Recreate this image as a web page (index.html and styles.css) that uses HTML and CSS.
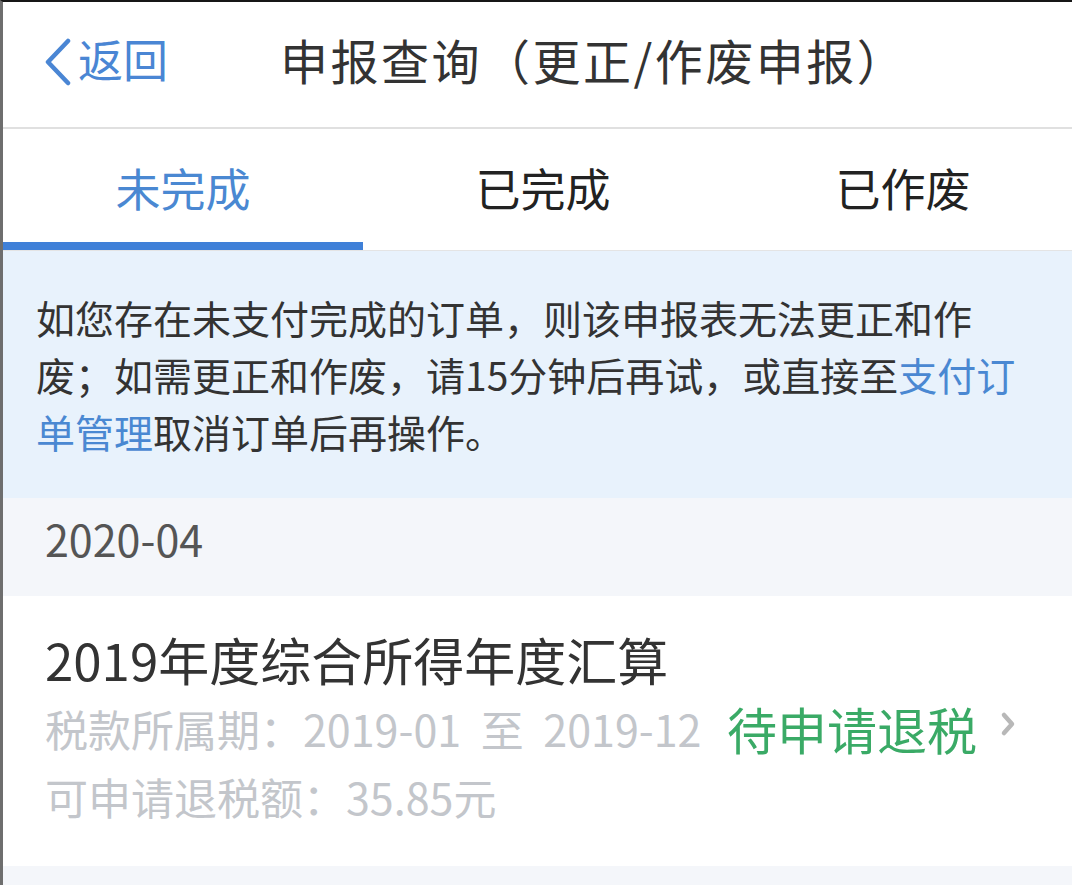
FILE: index.html
```html
<!DOCTYPE html>
<html lang="zh-CN">
<head>
<meta charset="utf-8">
<title>申报查询</title>
<link rel="stylesheet" href="styles.css">
</head>
<body>
<div class="app">
  <header class="nav">
    <a class="back">
      <svg class="back-icon" viewBox="0 0 30 48" width="30" height="48"><polyline points="25,3 5,24 25,45" fill="none" stroke="#4a86d4" stroke-width="4.5" stroke-linecap="round" stroke-linejoin="round"/></svg>
      <span>返回</span>
    </a>
    <h1 class="title">申报查询（更正/作废申报）</h1>
  </header>
  <nav class="tabs">
    <div class="tab active">未完成</div>
    <div class="tab">已完成</div>
    <div class="tab">已作废</div>
  </nav>
  <div class="notice">如您存在未支付完成的订单，则该申报表无法更正和作废；如需更正和作废，请15分钟后再试，或直接至<a class="link">支付订单管理</a>取消订单后再操作。</div>
  <div class="group-date">2020-04</div>
  <div class="record">
    <div class="record-title">2019年度综合所得年度汇算</div>
    <div class="record-row">
      <span class="muted">税款所属期：2019-01 至 2019-12</span>
      <span class="status">待申请退税</span>
      <svg class="chev" viewBox="0 0 18 26" width="18" height="26"><polyline points="5,4 13,13 5,22" fill="none" stroke="#b8b8b8" stroke-width="4.5" stroke-linecap="round" stroke-linejoin="round"/></svg>
    </div>
    <div class="muted">可申请退税额：35.85元</div>
  </div>
</div>
</body>
</html>
```

FILE: styles.css
```css
* {
  box-sizing: border-box;
  margin: 0;
  padding: 0;
}

html, body {
  height: 100%;
}

body {
  font-family: "Noto Sans CJK SC", "Noto Sans", sans-serif;
  background: #f4f6fa;
  color: #333;
}

.app {
  min-height: 100vh;
  border-top: 2px solid #161616;
  border-left: 3px solid #6e6e6e;
  background: #f4f6fa;
  overflow: hidden;
}

/* header */
.nav {
  height: 127px;
  display: flex;
  align-items: center;
  padding: 0 0 12px 40px;
  background: #fff;
  border-bottom: 2px solid #e0e0e0;
}

.back {
  display: flex;
  align-items: center;
  color: #4a86d4;
  font-size: 45px;
  line-height: 1;
}

.back-icon {
  display: block;
  margin-right: 5px;
  margin-top: 6px;
}

.title {
  margin-left: 112px;
  font-size: 48px;
  font-weight: 400;
  letter-spacing: 2.5px;
  color: #333;
  line-height: 1;
  white-space: nowrap;
}

/* tabs */
.tabs {
  display: flex;
  background: #fff;
  border-bottom: 1px solid #e4e4e4;
}

.tab {
  flex: 0 0 360px;
  text-align: center;
  font-size: 45px;
  padding-top: 5px;
  line-height: 108px;
  color: #222;
  border-bottom: 8px solid transparent;
}

.tab.active {
  color: #4a88d2;
  border-bottom-color: #3f80d8;
}

/* notice */
.notice {
  background: #e8f2fc;
  padding: 38px 35px 38px 33px;
  font-size: 39px;
  line-height: 57px;
  color: #333;
}

.link {
  color: #4a88d2;
}

/* group date */
.group-date {
  height: 98px;
  padding: 10px 0 28px 42px;
  font-size: 43px;
  line-height: 60px;
  color: #555;
}

/* record */
.record {
  background: #fff;
  padding: 29px 55px 36px 42px;
}

.record-title {
  font-size: 51px;
  line-height: 68px;
  color: #333;
}

.record-row {
  display: flex;
  align-items: center;
  height: 70px;
}

.muted {
  font-size: 43px;
  line-height: 67px;
  color: #c3c6cb;
  word-spacing: 10px;
}

.status {
  margin-left: auto;
  font-size: 50px;
  line-height: 68px;
  color: #3aaa66;
}

.chev {
  display: block;
  margin-left: 22px;
  margin-bottom: 8px;
}
```
